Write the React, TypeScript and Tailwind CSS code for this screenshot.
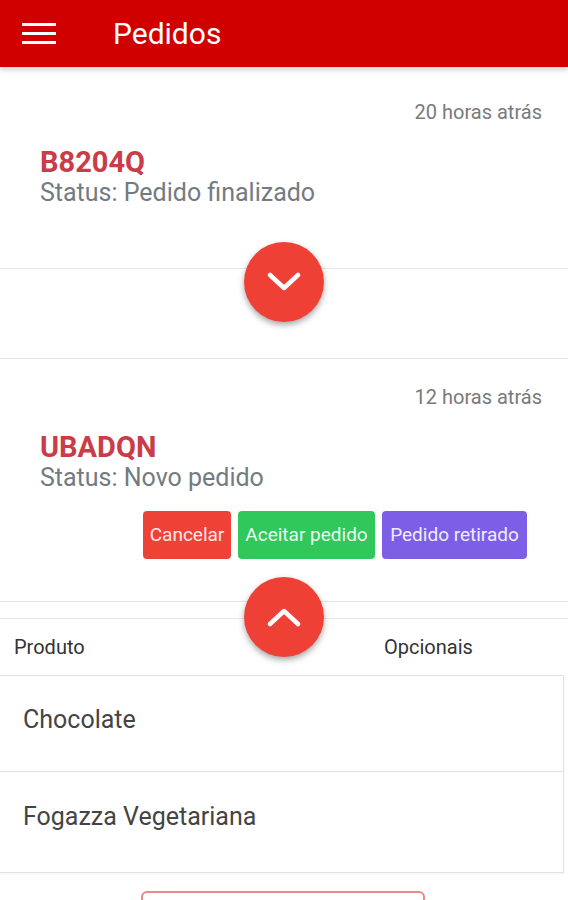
import React from 'react';

type Order = {
  code: string;
  status: string;
  time: string;
  open?: boolean;
};

function Chevron({ up }: { up?: boolean }) {
  return (
    <svg width="34" height="20" viewBox="0 0 34 20" fill="none">
      <polyline
        points={up ? '3,17 17,4 31,17' : '3,3 17,16 31,3'}
        stroke="white"
        strokeWidth="4.5"
        strokeLinecap="round"
        strokeLinejoin="round"
      />
    </svg>
  );
}

function Fab({ up }: { up?: boolean }) {
  return (
    <button className="w-20 h-20 rounded-full bg-[#ee4035] flex items-center justify-center shadow-[0_3px_6px_rgba(0,0,0,0.35)]">
      <Chevron up={up} />
    </button>
  );
}

function OrderCard({ order }: { order: Order }) {
  return (
    <div className="relative border-b border-[#e6e6e6]">
      <div className="flex justify-end pr-[26px] text-[20px] leading-6 text-[#7a7a7a]">{order.time}</div>
      <div className="pl-10 mt-[22px]">
        <div className="text-[29px] leading-8 font-bold text-[#c93c48]">{order.code}</div>
        <div className="text-[25px] leading-7 text-[#737b82] mt-px">{order.status}</div>
      </div>
      {order.open ? (
        <div className="flex justify-end gap-[7px] pr-[41px] mt-[19px] pb-[42px] text-[19px]">
          <button className="w-[88px] h-12 rounded bg-[#ef4236] text-[#fde8e6]">Cancelar</button>
          <button className="w-[137px] h-12 rounded bg-[#30c85b] text-[#eafaef]">Aceitar pedido</button>
          <button className="w-[145px] h-12 rounded bg-[#7c5fe6] text-[#f0ecff]">Pedido retirado</button>
        </div>
      ) : (
        <div className="h-[61px]" />
      )}
    </div>
  );
}

export default function App() {
  const orders: Order[] = [
    { code: 'B8204Q', status: 'Status: Pedido finalizado', time: '20 horas atrás' },
    { code: 'UBADQN', status: 'Status: Novo pedido', time: '12 horas atrás', open: true },
  ];

  return (
    <div className="w-[568px] h-[900px] overflow-hidden bg-white flex flex-col font-['Roboto',sans-serif]">
      <header className="h-[67px] shrink-0 bg-[#d10000] flex items-center shadow-[0_3px_5px_rgba(0,0,0,0.18)] relative z-20">
        <div className="ml-[22px] w-[34px] flex flex-col gap-[6px]">
          <span className="h-[3px] bg-white" />
          <span className="h-[3px] bg-white" />
          <span className="h-[3px] bg-white" />
        </div>
        <h1 className="ml-[57px] text-[30px] text-white font-normal -mt-[1px]">Pedidos</h1>
      </header>

      <div className="flex-1 flex flex-col">
        <div className="pt-[33px]">
          <OrderCard order={orders[0]} />
          <div className="relative h-[89px]">
            <div className="absolute left-1/2 -translate-x-1/2 -top-[27px] z-10">
              <Fab />
            </div>
          </div>
        </div>

        <div className="border-t border-[#e6e6e6] pt-[26px]">
          <OrderCard order={orders[1]} />
          <div className="relative h-4">
            <div className="absolute left-1/2 -translate-x-1/2 -top-[25px] z-10">
              <Fab up />
            </div>
          </div>
        </div>

        <div className="border-t border-[#e6e6e6]">
          <div className="h-14 grid grid-cols-[384px_1fr] items-center text-[20px] text-[#333]">
            <span className="pl-[14px]">Produto</span>
            <span>Opcionais</span>
          </div>
          <div className="w-[564px] border border-l-0 border-[#e3e3e3] shadow-[0_1px_2px_rgba(0,0,0,0.05)]">
            <div className="h-[96px] flex items-center pl-[23px] pb-[8px] text-[25px] text-[#444] border-b border-[#e3e3e3]">Chocolate</div>
            <div className="h-[100px] flex items-center pl-[23px] pb-[10px] text-[25px] text-[#444]">Fogazza Vegetariana</div>
          </div>
          <div className="mt-[18px] ml-[141px] w-[284px] h-10 rounded-md border-2 border-[#e98a8a]" />
        </div>
      </div>
      <div className="h-[2px] shrink-0 bg-[#3b3b3b]" />
    </div>
  );
}
